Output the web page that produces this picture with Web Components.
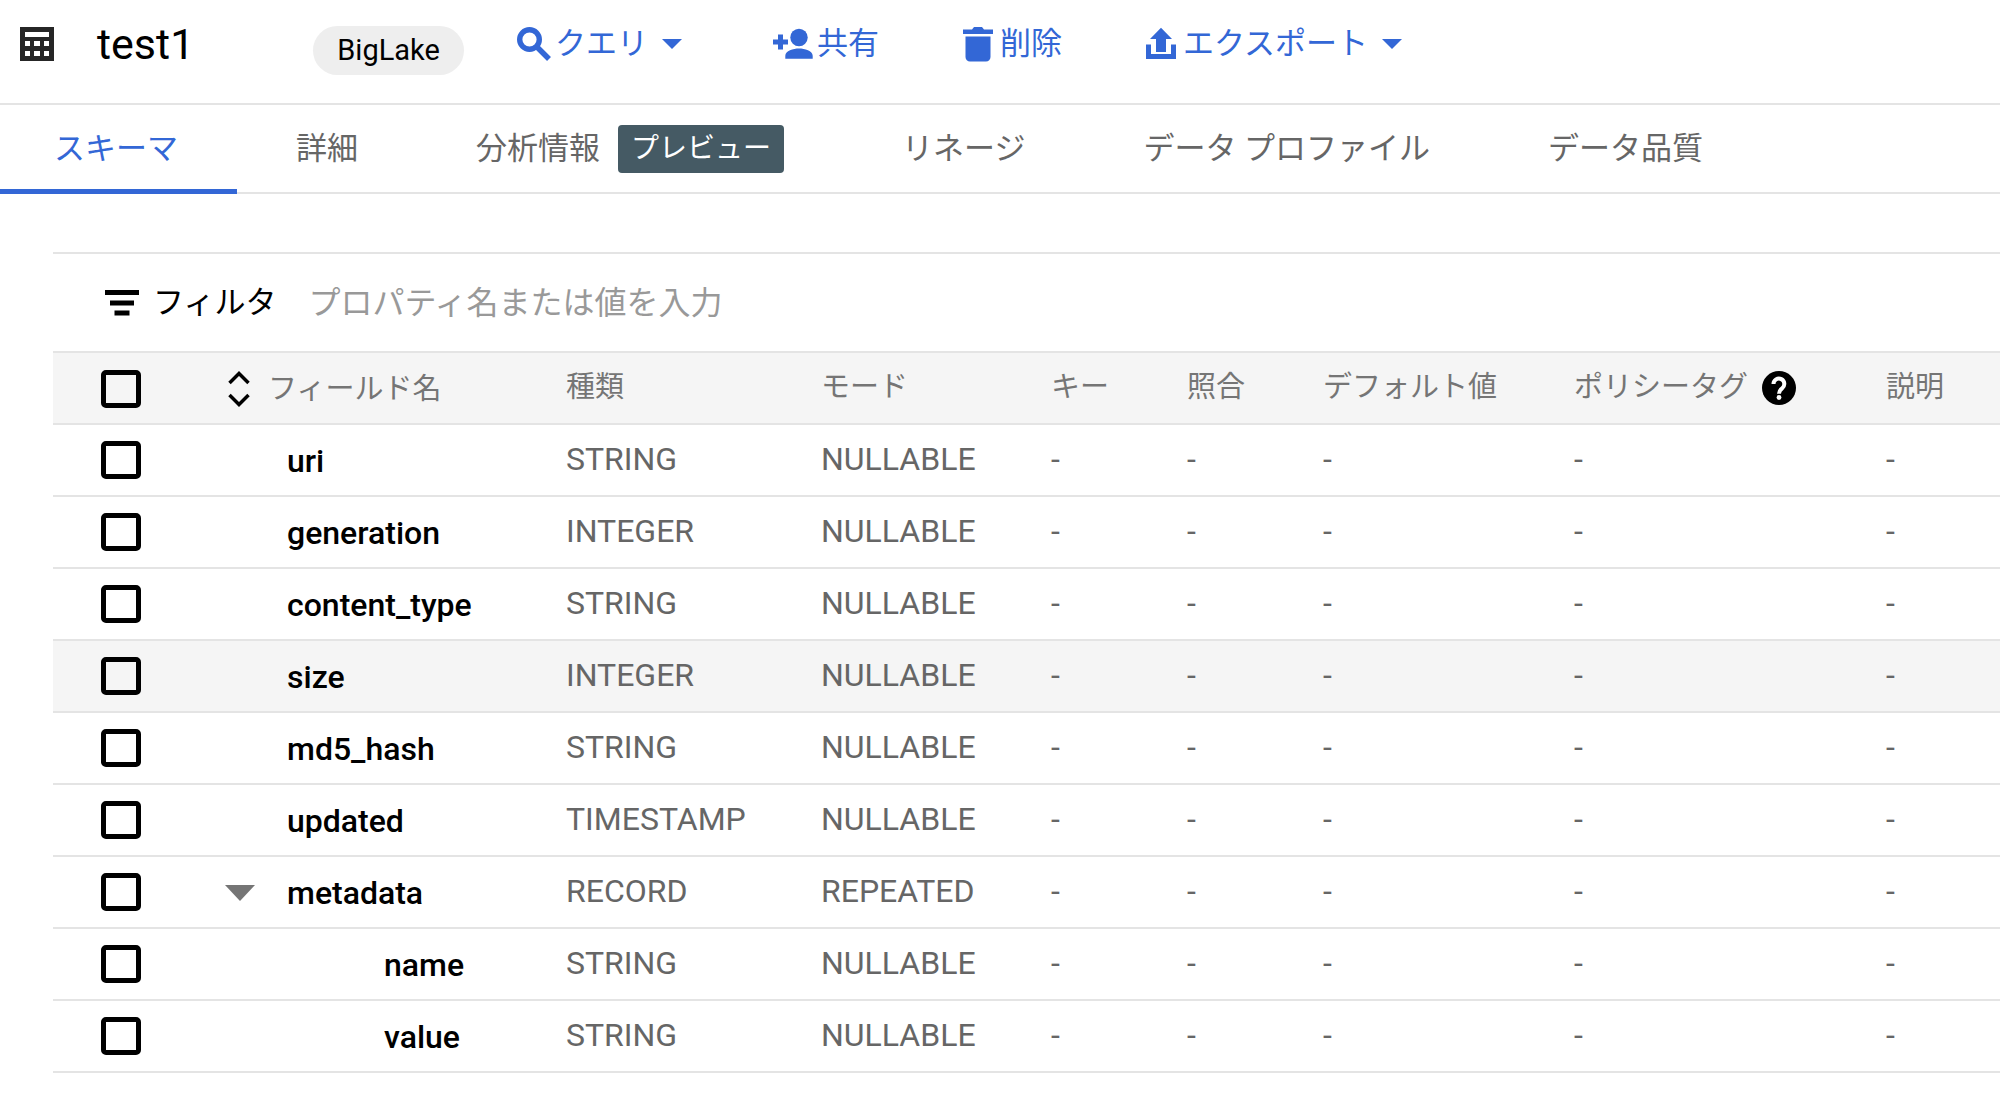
<!DOCTYPE html>
<html lang="ja">
<head>
<meta charset="utf-8">
<meta name="viewport" content="width=device-width, initial-scale=1">
<title>test1</title>
<style>
  body {
    margin: 0;
    background: #fff;
    color: #000;
    font-family: Roboto, "Noto Sans CJK JP", sans-serif;
    font-size: 31px;
    --blue: #3367d6;
    --line: #e4e4e4;
    --shade: #f5f5f5;
    --muted: #757575;
  }
</style>
</head>
<body>
<resource-header>
  <app-icon slot="icon" name="table" size="34"></app-icon>
  <span slot="title">test1</span>
  <span slot="chip">BigLake</span>
  <action-button icon="search" size="34" menu>クエリ</action-button>
  <action-button icon="person-add" size="40">共有</action-button>
  <action-button icon="trash" size="30" spaced>削除</action-button>
  <action-button icon="export" size="30" spaced menu>エクスポート</action-button>
</resource-header>
<tab-bar>
  <tab-item selected>スキーマ</tab-item>
  <tab-item>詳細</tab-item>
  <tab-item>分析情報<span slot="badge">プレビュー</span></tab-item>
  <tab-item>リネージ</tab-item>
  <tab-item>データ プロファイル</tab-item>
  <tab-item>データ品質</tab-item>
</tab-bar>
<schema-panel>
  <schema-filter></schema-filter>
  <schema-table></schema-table>
</schema-panel>

<script>
const ICONS = {
  table: ['0 0 34 34', '<path fill="#262626" fill-rule="evenodd" d="M0 0h34v34H0zM5 5v5h24V5zM5 14v5h5v-5zM14 14v5h6v-5zM24 14v5h5v-5zM5 24v5h5v-5zM14 24v5h6v-5zM24 24v5h5v-5z"/>'],
  search: ['0 0 34 34', '<circle cx="12.500" cy="12.500" r="9.800" fill="none" stroke="currentColor" stroke-width="5.400"/><path d="M19.500 19.500L32 32" stroke="currentColor" stroke-width="5.500"/>'],
  'person-add': ['0 0 40 34', '<circle cx="26" cy="10.500" r="8.700" fill="currentColor"/><path fill="currentColor" d="M12.300 31.700v-3c0-5 8-7.200 13.700-7.200s13.700 2.200 13.700 7.200v3zM5 7.500h5v5h5v5h-5v5H5v-5H0v-5h5z"/>'],
  trash: ['0 0 30 36', '<path fill="currentColor" d="M0 3.500h9l2-2.500h8l2 2.500h9V8H0zM2.500 10.500h25V31a4.500 4.500 0 0 1-4.500 4.500H7A4.500 4.500 0 0 1 2.500 31z"/>'],
  export: ['0 0 30 34', '<path fill="currentColor" d="M15 .7L26 12h-6v13H10V12H4zM0 17.500h5v9.500h20v-9.500h5v14.500H0z"/>'],
  caret: ['0 0 20 10', '<path fill="currentColor" d="M0 0h20L10 10z"/>'],
  expand: ['0 0 30 16', '<path fill="currentColor" d="M0 0h30L15 16z"/>'],
  filter: ['0 0 34 26', '<path fill="currentColor" d="M0 0h34v5H0zM5 10.500h24v5H5zM9.500 20.500h15v5h-15z"/>'],
  sort: ['0 0 22 36', '<path fill="none" stroke="currentColor" stroke-width="3.500" d="M1.500 12L11 2.500 20.500 12M1.500 24L11 33.500 20.500 24"/>'],
  help: ['0 0 34 34', '<circle cx="17" cy="17" r="17" fill="#000"/><path fill="none" stroke="#fff" stroke-width="4" d="M11.500 13a5.400 5.400 0 1 1 8.600 4.300c-2 1.500-3.100 2.700-3.100 5.400"/><circle cx="17" cy="26.500" r="2.400" fill="#fff"/>']
};

class Base extends HTMLElement {
  connectedCallback() {
    if (this.shadowRoot) return;
    this.attachShadow({ mode: 'open' }).innerHTML = this.render();
  }
}

customElements.define('app-icon', class extends Base {
  render() {
    const [box, shape] = ICONS[this.getAttribute('name')];
    return `<style>:host{display:inline-flex;flex:none}svg{display:block}</style>
      <svg width="${this.getAttribute('size')}" viewBox="${box}" aria-hidden="true">${shape}</svg>`;
  }
});

customElements.define('resource-header', class extends Base {
  render() {
    return `<style>
      :host{display:block}
      header{display:flex;align-items:center;box-sizing:border-box;height:105px;padding:0 20px 16px;border-bottom:2px solid var(--line)}
      h1{margin:0 0 0 43px;font-size:43px;line-height:48px;font-weight:400}
      .chip{margin:14px 0 0 119px;padding:0 24px;border-radius:25px;background:#eee;font-size:29px;line-height:49px}
      nav{display:flex;align-items:center;gap:84px;margin-left:53px}
    </style>
    <header><slot name="icon"></slot><h1><slot name="title"></slot></h1>
      <span class="chip"><slot name="chip"></slot></span><nav><slot></slot></nav></header>`;
  }
});

customElements.define('action-button', class extends Base {
  render() {
    const menu = this.hasAttribute('menu');
    return `<style>
      :host{display:block}
      button{display:flex;align-items:center;padding:0;border:0;background:none;color:var(--blue);font:inherit;line-height:40px;cursor:pointer}
      .label{margin-left:${this.hasAttribute('spaced') ? 7 : 4}px}
      .caret{margin:0 7px 0 14px}
    </style>
    <button type="button"${menu ? ' aria-haspopup="menu"' : ''}>
      <app-icon name="${this.getAttribute('icon')}" size="${this.getAttribute('size')}"></app-icon>
      <span class="label"><slot></slot></span>
      ${menu ? '<app-icon class="caret" name="caret" size="20"></app-icon>' : ''}</button>`;
  }
});

customElements.define('tab-bar', class extends Base {
  render() {
    return `<style>
      :host{display:block}
      div{display:flex;box-sizing:border-box;height:89px;padding-right:24px;border-bottom:2px solid var(--line)}
    </style><div role="tablist"><slot></slot></div>`;
  }
});

customElements.define('tab-item', class extends Base {
  render() {
    const on = this.hasAttribute('selected');
    return `<style>
      :host{display:flex}
      button{display:flex;align-items:center;padding:4px 59px 0;border:0;border-bottom:5px solid transparent;margin-bottom:-2px;background:none;color:#666;font:inherit;line-height:40px;white-space:nowrap;cursor:pointer}
      button.on{padding-left:54px;color:var(--blue);border-color:var(--blue)}
      ::slotted([slot=badge]){margin-left:18px;padding:0 13px;border-radius:4px;background:#455a64;color:#fff;font-size:28px;line-height:48px}
    </style>
    <button type="button" role="tab" aria-selected="${on}" class="${on ? 'on' : ''}"><span><slot></slot></span><slot name="badge"></slot></button>`;
  }
});

customElements.define('schema-panel', class extends Base {
  render() {
    return `<style>:host{display:block;margin:58px 0 0 53px;border-top:2px solid var(--line)}</style><slot></slot>`;
  }
});

customElements.define('schema-filter', class extends Base {
  render() {
    return `<style>
      :host{display:flex;align-items:center;height:97px;padding-left:52px}
      label{display:flex;align-items:center;gap:14px;font-size:31px;line-height:40px}
      input{flex:1;min-width:0;margin-left:32px;padding:0;border:0;outline:0;background:none;font:inherit;font-size:32px;line-height:40px;color:#000}
      input::placeholder{color:#999;opacity:1}
    </style>
    <label for="q"><app-icon name="filter" size="34"></app-icon><span>フィルタ</span></label>
    <input id="q" type="text" placeholder="プロパティ名または値を入力">`;
  }
});

const FIELDS = [
  ['uri', 'STRING', 'NULLABLE'],
  ['generation', 'INTEGER', 'NULLABLE'],
  ['content_type', 'STRING', 'NULLABLE'],
  ['size', 'INTEGER', 'NULLABLE', 'hover'],
  ['md5_hash', 'STRING', 'NULLABLE'],
  ['updated', 'TIMESTAMP', 'NULLABLE'],
  ['metadata', 'RECORD', 'REPEATED', 'parent'],
  ['name', 'STRING', 'NULLABLE', 'child'],
  ['value', 'STRING', 'NULLABLE', 'child']
];

customElements.define('schema-table', class extends Base {
  render() {
    const rows = FIELDS.map(([name, type, mode, kind = '']) => `
      <tr class="${kind}">
        <td class="check"><input type="checkbox" aria-label="${name}"></td>
        <th scope="row"><span class="name">${kind === 'parent' ? '<button type="button" aria-label="metadata" aria-expanded="true"><app-icon name="expand" size="30"></app-icon></button>' : ''}<span>${name}</span></span></th>
        <td>${type}</td><td>${mode}</td>${'<td>-</td>'.repeat(5)}
      </tr>`).join('');
    return `<style>
      :host{display:block}
      table{width:100%;table-layout:fixed;border-collapse:separate;border-spacing:0;font-size:32px;line-height:40px;color:#666}
      th,td{box-sizing:border-box;height:72px;padding:0 0 2px;border-bottom:2px solid var(--line);text-align:left;font-weight:400;vertical-align:middle;white-space:nowrap}
      thead th,thead td{height:74px;padding-bottom:2px;border-top:2px solid var(--line);background:var(--shade);font-size:29px;color:var(--muted)}
      .hover>*{background:var(--shade)}
      .check{padding:0 0 0 48px}
      thead .check{padding-top:2px;padding-bottom:0}
      input{display:block;box-sizing:border-box;width:40px;height:38px;margin:0;appearance:none;border:5px solid #000;border-radius:5px;background:transparent}
      input:checked{background:#000}
      tbody th{padding:2px 0 0;color:#000;font-weight:500}
      .name{display:flex;align-items:center;padding-left:62px}
      .parent .name{padding-left:0;gap:32px}
      .child .name{padding-left:159px}
      button{display:flex;align-items:center;padding:0;border:0;background:none;color:var(--muted);font:inherit;cursor:pointer}
      thead .sort{padding-top:2px;padding-bottom:0}
      .sort button{gap:18px;padding-left:3px}
      .sort app-icon{color:#000}
      .tag{display:flex;align-items:center;gap:14px}
      .tag app-icon{padding-top:2px}
      .c-check{width:172px}.c-name{width:341px}.c-type{width:255px}.c-mode{width:230px}
      .c-small{width:136px}.c-default{width:251px}.c-policy{width:312px}
    </style>
    <table>
      <colgroup><col class="c-check"><col class="c-name"><col class="c-type"><col class="c-mode"><col class="c-small"><col class="c-small"><col class="c-default"><col class="c-policy"><col></colgroup>
      <thead><tr>
        <td class="check"><input type="checkbox" aria-label="フィールド名"></td>
        <th scope="col" class="sort"><button type="button"><app-icon name="sort" size="22"></app-icon><span>フィールド名</span></button></th>
        <th scope="col">種類</th><th scope="col">モード</th><th scope="col">キー</th><th scope="col">照合</th>
        <th scope="col">デフォルト値</th>
        <th scope="col"><span class="tag"><span>ポリシータグ</span><app-icon name="help" size="34"></app-icon></span></th>
        <th scope="col">説明</th>
      </tr></thead>
      <tbody>${rows}</tbody>
    </table>`;
  }
});
</script>
</body>
</html>
